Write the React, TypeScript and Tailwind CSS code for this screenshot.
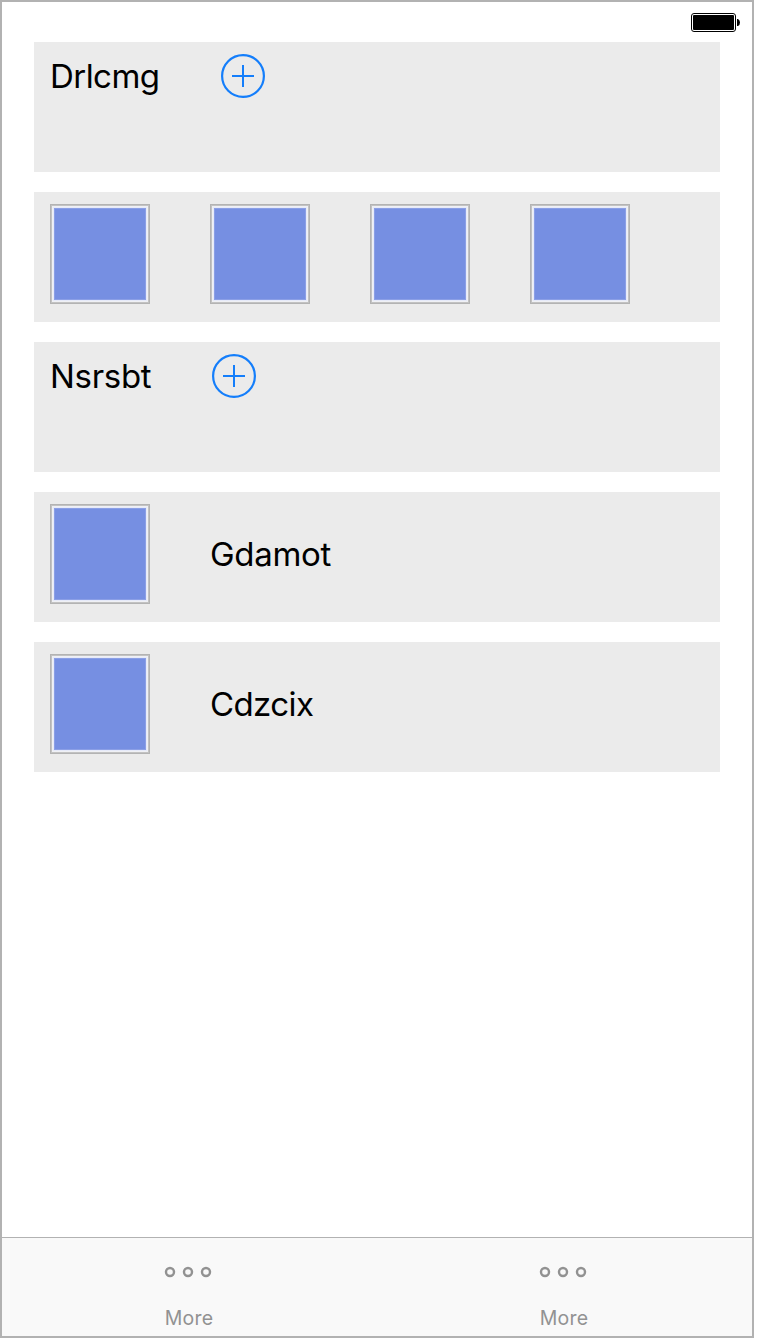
import type { ReactNode } from "react";

function Battery() {
  return (
    <svg width="50" height="20" viewBox="0 0 50 20" className="block">
      <rect x="0.5" y="0.5" width="44" height="18" rx="2.5" fill="#fff" stroke="#000" />
      <rect x="2" y="2" width="41" height="15" rx="1" fill="#000" />
      <path d="M46 6h1q2 1 2 3.5t-2 3.5h-1z" fill="#000" />
    </svg>
  );
}

function AddButton() {
  return (
    <button type="button" aria-label="Add" className="block size-11 shrink-0">
      <svg width="44" height="44" viewBox="0 0 44 44" fill="none" stroke="#147efb" strokeWidth="2">
        <circle cx="22" cy="22" r="20.9" strokeWidth="2.2" />
        <path d="M22 11v22M11 22h22" />
      </svg>
    </button>
  );
}

function Tile() {
  return (
    <div className="size-[100px] shrink-0 border border-[#b3b3b3]">
      <div className="size-full border border-[#c2c2c2]">
        <div className="size-full border border-[#eff0f4]">
          <div className="size-full border border-[#e6eaf9]">
            <div className="size-full border border-[#8b9fe6] bg-[#768fe2]" />
          </div>
        </div>
      </div>
    </div>
  );
}

function Panel({ children, className }: { children: ReactNode; className: string }) {
  return <section className={`flex h-[130px] bg-[#ebebeb] px-4 pt-3 ${className}`}>{children}</section>;
}

function Label({ text, className }: { text: string; className: string }) {
  return (
    <span className={`block whitespace-nowrap text-[33px] leading-[45px] text-black ${className}`}>{text}</span>
  );
}

function MoreTab() {
  return (
    <button type="button" className="flex flex-1 flex-col items-center pr-[3px] pt-7 text-[#929292]">
      <svg width="48" height="12" viewBox="0 0 48 12" fill="none" stroke="currentColor" strokeWidth="2.4">
        <circle cx="6" cy="6" r="4" />
        <circle cx="24" cy="6" r="4" />
        <circle cx="42" cy="6" r="4" />
      </svg>
      <span className="mt-7 pl-0.5 text-[19.5px] leading-6 tracking-[0.2px]">More</span>
    </button>
  );
}

export default function App() {
  return (
    <div className="h-[1340px] w-[760px] bg-white font-['Inter','Liberation_Sans',sans-serif]">
      <div className="flex h-[1338px] w-[754px] flex-col border-2 border-[#b2b2b2] bg-white">
        <header className="flex h-10 shrink-0 justify-end pr-[11px] pt-[11px]">
          <Battery />
        </header>
        <main className="flex flex-1 flex-col gap-5 px-8">
          <Panel className="items-start">
            <Label text="Drlcmg" className="w-[171px] tracking-[-0.55px]" />
            <AddButton />
          </Panel>
          <Panel className="items-start gap-[60px]">
            <Tile />
            <Tile />
            <Tile />
            <Tile />
          </Panel>
          <Panel className="items-start">
            <Label text="Nsrsbt" className="w-[162px] tracking-[-0.3px]" />
            <AddButton />
          </Panel>
          <Panel className="items-start gap-[60px]">
            <Tile />
            <Label text="Gdamot" className="mt-7 tracking-[-0.3px]" />
          </Panel>
          <Panel className="items-start gap-[60px]">
            <Tile />
            <Label text="Cdzcix" className="mt-7 tracking-[-0.6px]" />
          </Panel>
        </main>
        <nav className="flex h-[99px] shrink-0 border-t border-[#b2b2b2] bg-[#f9f9f9]">
          <MoreTab />
          <MoreTab />
        </nav>
      </div>
    </div>
  );
}
